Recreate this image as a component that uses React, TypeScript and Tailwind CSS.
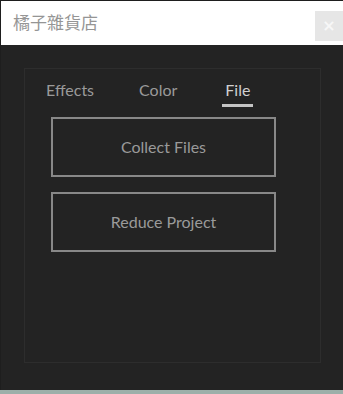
import React from "react";

const tabs = ["Effects", "Color", "File"];
const active = "File";

const App = () => {
  return (
    <div className="w-[343px] h-[394px] flex flex-col bg-[#9cafa9] overflow-hidden">
      <div className="h-[390px] flex flex-col border-t border-l border-[#1e1e1e]">
        <div className="h-[44px] bg-white flex items-start justify-between shrink-0">
          <span className="mt-[9px] ml-[12px] text-[17px] leading-[24px] text-[#959595] font-['Noto_Sans_CJK_TC','Noto_Sans_CJK_SC',sans-serif]">
            橘子雜貨店
          </span>
          <button className="mt-[10px] w-[28px] h-[30px] bg-[#e6e6e6] flex items-center justify-center text-[#f7f7f7] text-[16px] font-bold leading-none font-['DejaVu_Sans',sans-serif]">
            ×
          </button>
        </div>
        <div className="flex-1 bg-[#232323] pl-[23px] pr-[22px] pt-[23px] pb-[27px] flex">
          <div className="flex-1 border border-[#2d2d2d] flex flex-col font-['Lato',sans-serif]">
            <div className="flex gap-[45px] pl-[21px] pt-[10px] h-[48px]">
              {tabs.map((t) => (
                <div key={t} className="flex flex-col items-center">
                  <span
                    className={`text-[16px] leading-[22px] ${
                      t === active ? "text-[#d0d0d0]" : "text-[#9a9a9a]"
                    }`}
                  >
                    {t}
                  </span>
                  {t === active && (
                    <span className="mt-[3px] h-[3px] w-[31px] bg-[#c4c4c4]" />
                  )}
                </div>
              ))}
            </div>
            <div className="flex flex-col gap-[15px] pl-[26px]">
              <button className="w-[225px] h-[60px] border-2 border-[#888888] text-[16px] text-[#9a9a9a]">
                Collect Files
              </button>
              <button className="w-[225px] h-[60px] border-2 border-[#888888] text-[16px] text-[#9a9a9a]">
                Reduce Project
              </button>
            </div>
          </div>
        </div>
      </div>
    </div>
  );
};

export default App;
